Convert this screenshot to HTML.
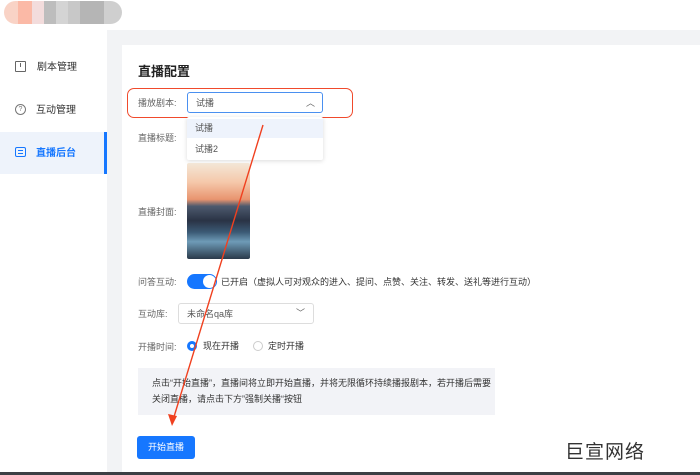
<!DOCTYPE html>
<html><head><meta charset="utf-8"><style>
*{margin:0;padding:0;box-sizing:border-box}
body{width:700px;height:475px;overflow:hidden;background:#fff;font-family:"Liberation Sans","Noto Sans CJK SC",sans-serif;position:relative;color:#333}
.abs{position:absolute}
.lbl{font-size:9px;color:#666}
</style></head><body>
<div class="abs" style="left:4px;top:1px;width:118px;height:23px;border-radius:12px;overflow:hidden;display:flex">
<div style="width:14px;background:#f9d3c6"></div><div style="width:14px;background:#fbb9a6"></div><div style="width:12px;background:#f3dcdc"></div><div style="width:12px;background:#bdbdbd"></div><div style="width:12px;background:#d4d4d4"></div><div style="width:12px;background:#c8c8c8"></div><div style="width:24px;background:#b5b5b5"></div><div style="width:18px;background:#cfcfcf"></div></div>
<div class="abs" style="left:107px;top:30px;width:593px;height:442px;background:#f2f3f5"></div>
<div class="abs" style="left:122px;top:45px;width:578px;height:427px;background:#fff"></div>
<div class="abs" style="left:0;top:472px;width:700px;height:3px;background:#3c3f44"></div>
<!-- sidebar -->
<div class="abs" style="left:15px;top:61px;width:11px;height:11px;border:1.3px solid #666;border-radius:1px"></div>
<div class="abs" style="left:20px;top:63px;width:1.3px;height:4px;background:#666"></div>
<div class="abs" style="left:37px;top:58px;font-size:10px;color:#333">剧本管理</div>
<div class="abs" style="left:15px;top:104px;width:11px;height:11px;border:1.2px solid #777;border-radius:50%;font-size:7px;line-height:9px;text-align:center;color:#777">?</div>
<div class="abs" style="left:36px;top:101px;font-size:10px;color:#333">互动管理</div>
<div class="abs" style="left:0;top:132px;width:104px;height:42px;background:#eef3fb"></div>
<div class="abs" style="left:104px;top:132px;width:3px;height:42px;background:#1677ff"></div>
<div class="abs" style="left:15px;top:147px;width:11px;height:10px;border:1.3px solid #1677ff;border-radius:2px"></div>
<div class="abs" style="left:18px;top:150px;width:5px;height:1px;background:#1677ff;box-shadow:0 3px 0 #1677ff"></div>
<div class="abs" style="left:36px;top:144px;font-size:10px;color:#1677ff;font-weight:bold">直播后台</div>
<!-- content -->
<div class="abs" style="left:138px;top:61px;font-size:13px;color:#222;font-weight:bold">直播配置</div>
<div class="abs" style="left:127px;top:88px;width:226px;height:30px;border:1.3px solid #f04a2c;border-radius:7px"></div>
<div class="abs lbl" style="left:138px;top:96px">播放剧本:</div>
<div class="abs" style="left:187px;top:92px;width:136px;height:21px;border:1px solid #4a90f0;border-radius:3px;font-size:9px;color:#555;padding:3px 8px">试播<span style="position:absolute;right:7px;top:3px;font-size:9px;color:#666">︿</span></div>
<div class="abs" style="left:187px;top:117px;width:136px;height:43px;background:#fff;box-shadow:0 1px 5px rgba(0,0,0,.15);border-radius:2px"></div>
<div class="abs" style="left:187px;top:119px;width:136px;height:19px;background:#eef3fc"></div>
<div class="abs" style="left:195px;top:121px;font-size:9px;color:#555">试播</div>
<div class="abs" style="left:195px;top:142px;font-size:9px;color:#555">试播2</div>
<div class="abs lbl" style="left:138px;top:131px">直播标题:</div>
<div class="abs lbl" style="left:138px;top:205px">直播封面:</div>
<div class="abs" style="left:187px;top:163px;width:63px;height:96px;border-radius:2px;background:linear-gradient(#f3e7d7 0%,#f5c8aa 20%,#e8946f 38%,#4d5a6e 45%,#2a3345 60%,#3b5a75 72%,#6e9bb7 82%,#2a3a4a 100%)"></div>
<div class="abs lbl" style="left:138px;top:275px">问答互动:</div>
<div class="abs" style="left:187px;top:274px;width:30px;height:15px;border-radius:8px;background:#1677ff"></div>
<div class="abs" style="left:203px;top:275px;width:13px;height:13px;border-radius:50%;background:#fff"></div>
<div class="abs" style="left:221px;top:275px;font-size:9px;color:#333">已开启（虚拟人可对观众的进入、提问、点赞、关注、转发、送礼等进行互动）</div>
<div class="abs lbl" style="left:138px;top:307px">互动库:</div>
<div class="abs" style="left:178px;top:303px;width:136px;height:21px;border:1px solid #ddd;border-radius:3px;font-size:9px;color:#555;padding:3px 8px">未命名qa库<span style="position:absolute;right:8px;top:2px;font-size:9px;color:#666">﹀</span></div>
<div class="abs lbl" style="left:138px;top:340px">开播时间:</div>
<div class="abs" style="left:187px;top:341px;width:10px;height:10px;border-radius:50%;border:3px solid #1677ff"></div>
<div class="abs" style="left:203px;top:339px;font-size:9px;color:#333">现在开播</div>
<div class="abs" style="left:253px;top:341px;width:10px;height:10px;border-radius:50%;border:1px solid #ccc"></div>
<div class="abs" style="left:268px;top:339px;font-size:9px;color:#333">定时开播</div>
<div class="abs" style="left:138px;top:368px;width:357px;height:47px;background:#f2f3f7;padding:7px 4px 0 14px;font-size:9px;line-height:16px;color:#333">点击“开始直播”，直播间将立即开始直播，并将无限循环持续播报剧本，若开播后需要关闭直播，请点击下方”强制关播“按钮</div>
<div class="abs" style="left:137px;top:436px;width:58px;height:23px;background:#1677ff;border-radius:3px;color:#fff;font-size:9px;text-align:center;line-height:23px">开始直播</div>
<div class="abs" style="left:565px;top:437px;font-size:19px;color:#333;letter-spacing:1px">巨宣网络</div>
<svg class="abs" style="left:0;top:0" width="700" height="475"><line x1="263" y1="125" x2="173" y2="420" stroke="#f0401f" stroke-width="1.4"/><polygon points="172,426 168,414 177,416" fill="#f0401f"/></svg>
</body></html>
